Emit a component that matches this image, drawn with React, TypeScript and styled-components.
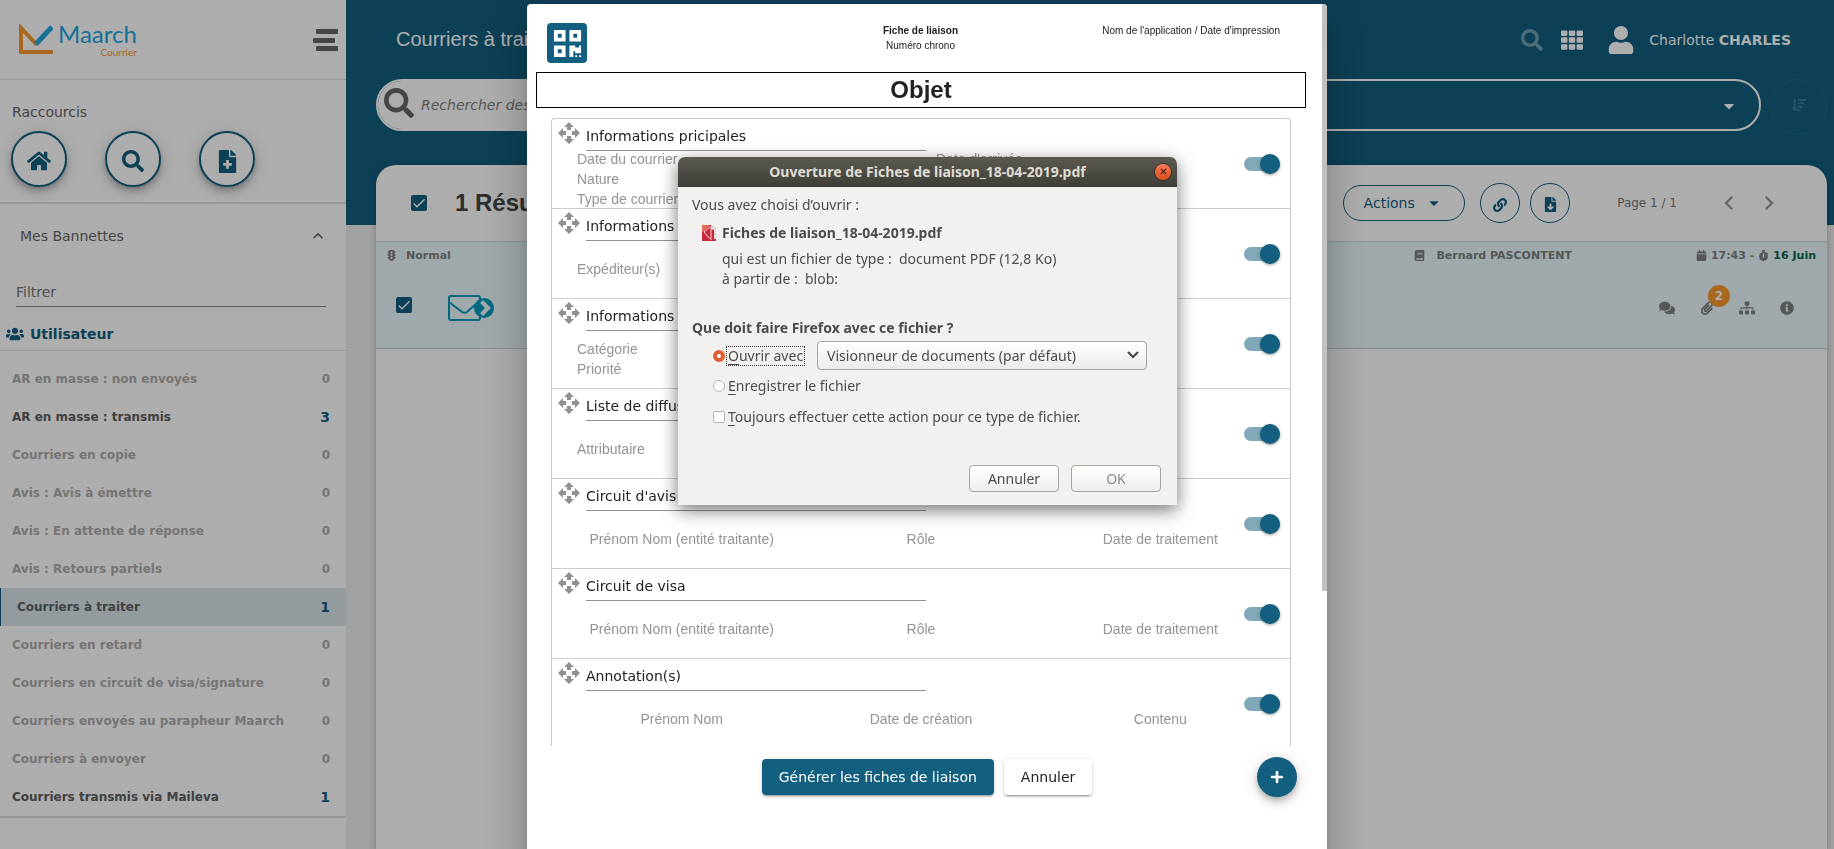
import React from "react";
import styled, { createGlobalStyle } from "styled-components";
import {
  FaBook,
  FaCalendar,
  FaCaretDown,
  FaComments,
  FaFileDownload,
  FaFileMedical,
  FaHome,
  FaInfoCircle,
  FaLink,
  FaPaperclip,
  FaPlus,
  FaQrcode,
  FaSearch,
  FaSitemap,
  FaSortAmountDown,
  FaStopwatch,
  FaTh,
  FaTrafficLight,
  FaUser,
  FaUsers,
} from "react-icons/fa";
import { MdCheck, MdChevronLeft, MdChevronRight, MdExpandLess, MdOpenWith } from "react-icons/md";

const teal = "#135f7f";
const orange = "#f99830";
const divider = "#e0e0e0";
const dejavu = '"DejaVu Sans", sans-serif';
const liberation = '"Liberation Sans", Arial, sans-serif';
const system = '"Noto Sans", "Open Sans", sans-serif';

const GlobalStyle = createGlobalStyle`
  *, *::before, *::after { box-sizing: border-box; }
  body { margin: 0; font-family: ${dejavu}; font-size: 14px; color: #666; overflow: hidden; }
  button, input, select { font: inherit; color: inherit; margin: 0; }
  button { cursor: pointer; padding: 0; border: 0; background: none; }
  ul { list-style: none; margin: 0; padding: 0; }
  h1, h2, h3, p { margin: 0; font-weight: normal; }
  svg { display: block; flex: none; }
`;

/* ---------- Application shell ---------- */

const Shell = styled.div`
  display: flex;
  height: 100vh;
  min-height: 840px;
  background: #ededed;
`;

const Sidebar = styled.aside`
  flex: none;
  width: 346px;
  background: #fff;
`;

const SidebarTop = styled.div`
  display: flex;
  align-items: center;
  justify-content: space-between;
  height: 80px;
  padding: 0 8px 0 19px;
  border-bottom: 1px solid ${divider};
`;

const Logo = styled.div`
  display: flex;
  align-items: center;
  gap: 5px;
`;

const LogoWords = styled.div`
  display: flex;
  flex-direction: column;
  align-items: flex-end;
  font-family: Lato, sans-serif;
`;

const LogoName = styled.span`
  font-size: 24px;
  line-height: 25px;
  font-weight: 400;
  color: #24a5dd;
`;

const LogoSub = styled.span`
  font-size: 10px;
  line-height: 12px;
  color: ${orange};
`;

const Shortcuts = styled.section`
  height: 124px;
  padding: 22px 11px 0;
  border-bottom: 2px solid ${divider};
`;

const SectionLabel = styled.h2`
  font-size: 14px;
  line-height: 20px;
  padding-left: 1px;
`;

const ShortcutRow = styled.div`
  display: flex;
  gap: 38px;
  margin-top: 9px;
`;

const ShortcutButton = styled.button`
  display: grid;
  place-items: center;
  width: 56px;
  height: 56px;
  padding-top: 4px;
  border: 2px solid ${teal};
  border-radius: 50%;
  color: ${teal};
  background: #fff;
  box-shadow: 0 3px 5px -1px rgba(0, 0, 0, 0.2), 0 6px 10px rgba(0, 0, 0, 0.14),
    0 1px 18px rgba(0, 0, 0, 0.12);
`;

const BasketHeader = styled.div`
  display: flex;
  align-items: center;
  justify-content: space-between;
  height: 64px;
  padding: 0 18px 0 20px;
`;

const FilterInput = styled.input`
  display: block;
  width: calc(100% - 36px);
  height: 31px;
  margin: 8px 0 0 16px;
  padding: 1px 0 0;
  border: 0;
  border-bottom: 1px solid #858585;
  background: none;
  outline: none;
  &::placeholder {
    color: #767676;
    opacity: 1;
  }
`;

const GroupTitle = styled.h3`
  display: flex;
  align-items: center;
  gap: 6px;
  height: 44px;
  padding: 10px 0 0 6px;
  border-bottom: 1px solid ${divider};
  font-size: 14px;
  font-weight: bold;
  color: ${teal};
`;

const BasketList = styled.ul`
  padding-top: 9px;
  border-bottom: 2px solid ${divider};
`;

const Basket = styled.li<{ $active?: boolean }>`
  display: flex;
  align-items: center;
  justify-content: space-between;
  height: 38px;
  padding: 0 16px 0 ${(p) => (p.$active ? "16px" : "12px")};
  border-left: ${(p) => (p.$active ? `1px solid ${teal}` : "0")};
  background: ${(p) => (p.$active ? "#dae5ea" : "transparent")};
  color: #adadad;
  font-size: 12px;
  font-weight: bold;
`;

const BasketCount = styled.span<{ $filled?: boolean }>`
  font-size: ${(p) => (p.$filled ? "14px" : "12px")};
  color: ${(p) => (p.$filled ? teal : "inherit")};
`;

const BasketName = styled.span<{ $filled?: boolean }>`
  color: ${(p) => (p.$filled ? "#606060" : "#adadad")};
`;

/* ---------- Main column ---------- */

const Main = styled.main`
  flex: 1;
  min-width: 0;
  display: flex;
  flex-direction: column;
`;

const Banner = styled.header`
  height: 225px;
  background: ${teal};
  color: #fff;
`;

const TopBar = styled.div`
  display: flex;
  align-items: center;
  height: 79px;
  padding: 0 43px 0 50px;
`;

const PageTitle = styled.h1`
  flex: 1;
  font-family: ${liberation};
  font-size: 20px;
`;

const UserTools = styled.div`
  display: flex;
  align-items: center;
  gap: 18px;
`;

const IconButton = styled.button<{ $dim?: boolean }>`
  display: grid;
  place-items: center;
  opacity: ${(p) => (p.$dim ? 0.4 : 1)};
`;

const UserName = styled.span`
  display: flex;
  align-items: center;
  gap: 14px;
  margin-left: 6px;
`;

const SearchRow = styled.div`
  display: flex;
  gap: 10px;
  padding: 0 7px 0 30px;
`;

const SearchBar = styled.div`
  flex: 1;
  display: flex;
  height: 52px;
  border-radius: 26px;
  border: 2px solid #fff;
`;

const SearchField = styled.label`
  flex: 1;
  display: flex;
  align-items: center;
  gap: 5px;
  padding-left: 6px;
  border-radius: 24px 0 0 24px;
  background: #fff;
  color: #666;
  svg {
    margin-bottom: 5px;
  }
  input {
    flex: 1;
    border: 0;
    outline: none;
    background: none;
    font-style: italic;
  }
  input::placeholder {
    color: #808080;
    opacity: 1;
  }
`;

const FilterDrop = styled.button`
  flex: 1;
  display: flex;
  align-items: center;
  justify-content: flex-end;
  padding: 2px 22px 0 0;
`;

const SortButton = styled.button`
  display: grid;
  place-items: center;
  width: 56px;
  height: 56px;
  padding-bottom: 4px;
  border: 1px solid #26647f;
  border-radius: 50%;
  color: #3f819e;
`;

const Panel = styled.section`
  flex: 1;
  margin: -60px 7px 0 30px;
  border-radius: 20px 20px 0 0;
  background: #fff;
  box-shadow: 0 2px 6px rgba(0, 0, 0, 0.25);
  overflow: hidden;
`;

const PanelHeader = styled.div`
  display: flex;
  align-items: center;
  height: 77px;
  padding: 0 44px 0 35px;
  border-bottom: 1px solid #d6d6d6;
`;

const CheckSquare = styled.label`
  position: relative;
  display: grid;
  width: 16px;
  height: 16px;
  border-radius: 2px;
  background: ${teal};
  color: #fff;
  input {
    position: absolute;
    inset: 0;
    opacity: 0;
  }
`;

const ResultCount = styled.h2`
  flex: 1;
  margin-left: 28px;
  font-family: ${liberation};
  font-size: 24px;
  font-weight: bold;
  color: #444;
`;

const ActionsButton = styled.button`
  display: flex;
  align-items: center;
  justify-content: center;
  gap: 12px;
  width: 122px;
  height: 36px;
  margin-right: 15px;
  padding-right: 4px;
  border: 1px solid ${teal};
  border-radius: 18px;
  color: ${teal};
`;

const RoundButton = styled.button`
  display: grid;
  place-items: center;
  width: 40px;
  height: 40px;
  margin-right: 10px;
  padding-top: 3px;
  border: 1px solid ${teal};
  border-radius: 50%;
  color: ${teal};
`;

const PageLabel = styled.span`
  margin: 0 38px 0 37px;
  font-size: 12px;
  color: #767676;
`;

const Pager = styled.div`
  display: flex;
  gap: 12px;
  color: #999;
`;

const MailRow = styled.article`
  height: 107px;
  background: #ebf9fd;
  border-bottom: 1px solid #c8d4d8;
  color: #808080;
`;

const MailMeta = styled.div`
  display: flex;
  align-items: center;
  height: 26px;
  padding: 0 11px 0 10px;
  font-size: 11px;
  font-weight: bold;
`;

const MetaItem = styled.span<{ $gap: number }>`
  display: flex;
  align-items: center;
  gap: ${(p) => p.$gap}px;
`;

const Sender = styled(MetaItem)`
  margin: 0 124px 0 auto;
`;

const DueDate = styled.span`
  color: #0a6849;
`;

const MailBody = styled.div`
  display: flex;
  align-items: center;
  height: 76px;
  padding: 4px 20px 0;
  ${CheckSquare} {
    margin-bottom: 6px;
  }
`;

const MailIcon = styled.svg`
  margin-left: 36px;
  color: #0098bd;
`;

const MailTools = styled.div`
  display: flex;
  margin-left: auto;
`;

const MailTool = styled.button`
  position: relative;
  display: grid;
  place-items: center;
  width: 40px;
  height: 40px;
`;

const Badge = styled.span`
  position: absolute;
  top: -3px;
  right: -3px;
  width: 22px;
  height: 22px;
  border-radius: 50%;
  background: ${orange};
  color: #fff;
  font-size: 12px;
  line-height: 22px;
  font-weight: bold;
`;

/* ---------- Summary sheet dialog ---------- */

const Backdrop = styled.div`
  position: fixed;
  inset: 0;
  display: flex;
  justify-content: center;
  padding: 4px 0 0 20px;
  background: rgba(0, 0, 0, 0.32);
`;

const Sheet = styled.div`
  position: relative;
  width: 100%;
  max-width: 800px;
  height: 900px;
  padding: 15px 21px 0 9px;
  border-radius: 4px;
  background: #fff;
  color: #222;
  box-shadow: 0 11px 15px -7px rgba(0, 0, 0, 0.2), 0 24px 38px 3px rgba(0, 0, 0, 0.14),
    0 9px 46px 8px rgba(0, 0, 0, 0.12);
`;

const ScrollThumb = styled.span`
  position: absolute;
  top: 0;
  right: 0;
  width: 5px;
  height: 587px;
  border-radius: 0 4px 0 0;
  background: #c1c1c1;
`;

const SheetHead = styled.div`
  display: grid;
  grid-template-columns: 1fr 1fr 1fr;
  height: 53px;
  padding: 4px 26px 0 11px;
  font-family: ${liberation};
  font-size: 10px;
  line-height: 15px;
`;

const QrButton = styled.button`
  display: grid;
  place-items: center;
  width: 40px;
  height: 40px;
  border-radius: 4px;
  background: ${teal};
  color: #fff;
`;

const SheetCenter = styled.div`
  padding-left: 14px;
  text-align: center;
`;

const SheetRight = styled.div`
  text-align: right;
`;

const Subject = styled.h2`
  height: 36px;
  border: 1px solid #000;
  font-family: ${liberation};
  font-size: 24px;
  line-height: 34px;
  font-weight: bold;
  text-align: center;
`;

const Units = styled.div`
  height: 628px;
  margin: 10px 15px 0;
  border: 1px solid #ccc;
  border-bottom: 0;
  border-radius: 4px 4px 0 0;
  overflow: hidden;
`;

const Unit = styled.section`
  position: relative;
  height: 90px;
  border-bottom: 1px solid #ccc;
`;

const UnitHead = styled.div`
  display: flex;
  gap: 5px;
  height: 30px;
  padding-left: 5px;
  svg {
    color: #919191;
    margin-top: 2px;
  }
`;

const UnitTitle = styled.input`
  width: 340px;
  height: 32px;
  padding: 2px 0 0;
  border: 0;
  border-bottom: 1px solid #949494;
  background: none;
  outline: none;
  color: #222;
`;

const UnitBody = styled.div<{ $columns: number; $centered?: boolean }>`
  display: grid;
  grid-template-columns: repeat(${(p) => p.$columns}, 1fr);
  align-content: center;
  height: 60px;
  padding: 0 10px;
  font-family: ${liberation};
  font-size: 14px;
  line-height: 20px;
  color: #949494;
  text-align: ${(p) => (p.$centered ? "center" : "left")};
  span {
    padding: 0 ${(p) => (p.$centered ? "0" : "15px")};
    white-space: nowrap;
  }
`;

const Toggle = styled.label`
  position: absolute;
  top: 38px;
  right: 10px;
  width: 36px;
  height: 14px;
  border-radius: 7px;
  background: #82a9ba;
  input {
    position: absolute;
    inset: 0;
    opacity: 0;
  }
  &::after {
    content: "";
    position: absolute;
    top: -3px;
    right: 0;
    width: 20px;
    height: 20px;
    border-radius: 50%;
    background: ${teal};
    box-shadow: 0 1px 3px rgba(0, 0, 0, 0.4);
  }
`;

const SheetActions = styled.div`
  position: relative;
  display: flex;
  justify-content: center;
  gap: 10px;
  margin-top: 13px;
  padding-left: 12px;
`;

const SheetButton = styled.button<{ $primary?: boolean }>`
  height: 36px;
  padding: 0 17px;
  border-radius: 4px;
  background: ${(p) => (p.$primary ? teal : "#fff")};
  color: ${(p) => (p.$primary ? "#fff" : "#222")};
  box-shadow: 0 3px 1px -2px rgba(0, 0, 0, 0.2), 0 2px 2px rgba(0, 0, 0, 0.14),
    0 1px 5px rgba(0, 0, 0, 0.12);
`;

const AddButton = styled.button`
  position: absolute;
  top: -2px;
  right: 9px;
  display: grid;
  place-items: center;
  width: 40px;
  height: 40px;
  border-radius: 50%;
  background: ${teal};
  color: #fff;
  box-shadow: 0 3px 5px -1px rgba(0, 0, 0, 0.2), 0 6px 10px rgba(0, 0, 0, 0.14),
    0 1px 18px rgba(0, 0, 0, 0.12);
`;

/* ---------- Browser download window ---------- */

const WindowLayer = styled.div`
  position: fixed;
  inset: 0;
  display: flex;
  justify-content: center;
  align-items: flex-start;
  padding: 157px 0 0 21px;
`;

const DownloadWindow = styled.div`
  width: 100%;
  max-width: 499px;
  border-radius: 7px 7px 0 0;
  background: #f2f1f0;
  color: #4c4c4c;
  font-family: ${system};
  font-size: 14px;
  line-height: 20px;
  box-shadow: 0 5px 18px rgba(0, 0, 0, 0.55);
`;

const WindowTitle = styled.div`
  display: grid;
  grid-template-columns: 1fr auto 1fr;
  align-items: center;
  height: 30px;
  padding: 0 6px 1px;
  border-radius: 7px 7px 0 0;
  background: linear-gradient(#5c5a50, #3f3e38);
  color: #dfdbd2;
`;

const CloseButton = styled.button`
  grid-column: 3;
  justify-self: end;
  display: grid;
  place-items: center;
  width: 16px;
  height: 16px;
  border-radius: 50%;
  background: linear-gradient(#f57b58, #df4d1b);
  box-shadow: 0 0 0 1px #34332e;
  color: #4a2417;
`;

const TitleText = styled.h2`
  grid-column: 2;
  font-size: 14px;
  font-weight: bold;
`;

const WindowBody = styled.form`
  padding: 8px 14px 13px;
`;

const FileName = styled.p`
  display: flex;
  align-items: center;
  gap: 6px;
  margin: 8px 0 6px 10px;
  font-weight: bold;
`;

const Detail = styled.p`
  padding-left: 30px;
`;

const Question = styled.p`
  margin-top: 29px;
  font-weight: bold;
`;

const OptionRow = styled.div<{ $top: number }>`
  display: flex;
  align-items: center;
  gap: 2px;
  margin-top: ${(p) => p.$top}px;
  padding-left: 21px;
`;

const OptionInput = styled.input`
  appearance: none;
  width: 12px;
  height: 12px;
  border: 1px solid #b6b2ad;
  border-radius: ${(p) => (p.type === "radio" ? "50%" : "2px")};
  background: #fff;
  &:checked {
    border: 4px solid #dd6034;
  }
`;

const OptionLabel = styled.label<{ $focused?: boolean }>`
  padding: 0 1px;
  outline: ${(p) => (p.$focused ? "1px dotted #333" : "0")};
  line-height: ${(p) => (p.$focused ? "18px" : "20px")};
  u {
    text-underline-offset: 3px;
  }
`;

const AppSelect = styled.span`
  position: relative;
  flex: 1;
  margin: 0 16px 0 11px;
  select {
    appearance: none;
    display: block;
    width: 100%;
    height: 29px;
    padding: 0 30px 0 9px;
    border: 1px solid #a8a49f;
    border-radius: 4px;
    background: linear-gradient(#fff, #ebebea);
    outline: none;
  }
  svg {
    position: absolute;
    top: 9px;
    right: 8px;
    pointer-events: none;
  }
`;

const WindowButtons = styled.div`
  display: flex;
  justify-content: flex-end;
  gap: 12px;
  margin-top: 38px;
  padding-right: 2px;
`;

const WindowButton = styled.button`
  width: 90px;
  height: 27px;
  border: 1px solid #a8a49f;
  border-radius: 4px;
  background: linear-gradient(#fff, #eeeeed);
  &:disabled {
    color: #8c8c8c;
  }
`;

const baskets = [
  { name: "AR en masse : non envoyés", count: 0 },
  { name: "AR en masse : transmis", count: 3 },
  { name: "Courriers en copie", count: 0 },
  { name: "Avis : Avis à émettre", count: 0 },
  { name: "Avis : En attente de réponse", count: 0 },
  { name: "Avis : Retours partiels", count: 0 },
  { name: "Courriers à traiter", count: 1, active: true },
  { name: "Courriers en retard", count: 0 },
  { name: "Courriers en circuit de visa/signature", count: 0 },
  { name: "Courriers envoyés au parapheur Maarch", count: 0 },
  { name: "Courriers à envoyer", count: 0 },
  { name: "Courriers transmis via Maileva", count: 1 },
];

const units = [
  {
    title: "Informations pricipales",
    columns: 2,
    cells: ["Date du courrier", "Date d'arrivée", "Nature", "", "Type de courrier", ""],
  },
  { title: "Informations expéditeur", columns: 2, cells: ["Expéditeur(s)"] },
  { title: "Informations complémentaires", columns: 1, cells: ["Catégorie", "Priorité"] },
  { title: "Liste de diffusion", columns: 2, cells: ["Attributaire"] },
  {
    title: "Circuit d'avis",
    columns: 3,
    centered: true,
    cells: ["Prénom Nom (entité traitante)", "Rôle", "Date de traitement"],
  },
  {
    title: "Circuit de visa",
    columns: 3,
    centered: true,
    cells: ["Prénom Nom (entité traitante)", "Rôle", "Date de traitement"],
  },
  {
    title: "Annotation(s)",
    columns: 3,
    centered: true,
    cells: ["Prénom Nom", "Date de création", "Contenu"],
  },
];

function Checkbox({ label }: { label: string }) {
  return (
    <CheckSquare>
      <input type="checkbox" defaultChecked aria-label={label} />
      <MdCheck size={16} />
    </CheckSquare>
  );
}

function SidePanel() {
  return (
    <Sidebar>
      <SidebarTop>
        <Logo>
          <svg width="34" height="31" viewBox="0 0 34 31" fill="none" strokeWidth="4">
            <path d="M34 28H2V4L18 21" stroke={orange} />
            <path d="M17 20L33 3" stroke="#24a5dd" strokeWidth="5" />
          </svg>
          <LogoWords>
            <LogoName>Maarch</LogoName>
            <LogoSub>Courrier</LogoSub>
          </LogoWords>
        </Logo>
        <IconButton aria-label="Menu">
          <svg width="25" height="22" viewBox="0 0 25 22" fill="#666">
            <rect x="3" y="0" width="22" height="5" rx="1" />
            <rect x="0" y="9" width="22" height="5" rx="1" />
            <rect x="3" y="17" width="22" height="5" rx="1" />
          </svg>
        </IconButton>
      </SidebarTop>
      <Shortcuts>
        <SectionLabel>Raccourcis</SectionLabel>
        <ShortcutRow>
          <ShortcutButton aria-label="Accueil">
            <FaHome size={24} />
          </ShortcutButton>
          <ShortcutButton aria-label="Rechercher">
            <FaSearch size={22} />
          </ShortcutButton>
          <ShortcutButton aria-label="Enregistrer un courrier">
            <FaFileMedical size={23} />
          </ShortcutButton>
        </ShortcutRow>
      </Shortcuts>
      <BasketHeader>
        <span>Mes Bannettes</span>
        <MdExpandLess size={20} />
      </BasketHeader>
      <FilterInput placeholder="Filtrer" aria-label="Filtrer" />
      <GroupTitle>
        <FaUsers size={18} />
        Utilisateur
      </GroupTitle>
      <BasketList>
        {baskets.map((b) => (
          <Basket key={b.name} $active={b.active}>
            <BasketName $filled={b.count > 0}>{b.name}</BasketName>
            <BasketCount $filled={b.count > 0}>{b.count}</BasketCount>
          </Basket>
        ))}
      </BasketList>
    </Sidebar>
  );
}

function MailList() {
  return (
    <Main>
      <Banner>
        <TopBar>
          <PageTitle>Courriers à traiter</PageTitle>
          <UserTools>
            <IconButton $dim aria-label="Rechercher">
              <FaSearch size={22} />
            </IconButton>
            <IconButton aria-label="Applications">
              <FaTh size={22} />
            </IconButton>
            <UserName>
              <FaUser size={28} />
              <span>
                Charlotte <b>CHARLES</b>
              </span>
            </UserName>
          </UserTools>
        </TopBar>
        <SearchRow>
          <SearchBar>
            <SearchField>
              <FaSearch size={30} />
              <input placeholder="Rechercher des courriers" aria-label="Rechercher des courriers" />
            </SearchField>
            <FilterDrop aria-label="Filtres">
              <FaCaretDown size={16} />
            </FilterDrop>
          </SearchBar>
          <SortButton aria-label="Trier">
            <FaSortAmountDown size={14} />
          </SortButton>
        </SearchRow>
      </Banner>
      <Panel>
        <PanelHeader>
          <Checkbox label="Tout sélectionner" />
          <ResultCount>1 Résultat(s)</ResultCount>
          <ActionsButton>
            Actions <FaCaretDown size={14} />
          </ActionsButton>
          <RoundButton aria-label="Lier">
            <FaLink size={14} />
          </RoundButton>
          <RoundButton aria-label="Exporter">
            <FaFileDownload size={15} />
          </RoundButton>
          <PageLabel>Page 1 / 1</PageLabel>
          <Pager>
            <IconButton aria-label="Page précédente">
              <MdChevronLeft size={28} />
            </IconButton>
            <IconButton aria-label="Page suivante">
              <MdChevronRight size={28} />
            </IconButton>
          </Pager>
        </PanelHeader>
        <MailRow>
          <MailMeta>
            <MetaItem $gap={9}>
              <FaTrafficLight size={11} />
              Normal
            </MetaItem>
            <Sender $gap={11}>
              <FaBook size={11} />
              Bernard PASCONTENT
            </Sender>
            <MetaItem $gap={4}>
              <FaCalendar size={11} />
              17:43 -
              <FaStopwatch size={11} />
              <DueDate>16 Juin</DueDate>
            </MetaItem>
          </MailMeta>
          <MailBody>
            <Checkbox label="Sélectionner le courrier" />
            <MailIcon width="46" height="27" viewBox="0 0 46 27" fill="none">
              <rect x="1" y="1" width="31" height="24" rx="2" stroke="currentColor" strokeWidth="2" />
              <path d="M1 7L14 17Q16.500 18.500 19 17L28 9" stroke="currentColor" strokeWidth="2" />
              <circle cx="36" cy="13" r="10" fill="currentColor" />
              <path d="M32 8L35 5L43 13L35 21L32 18L37 13Z" fill="#ebf9fd" />
            </MailIcon>
            <MailTools>
              <MailTool aria-label="Annotations">
                <FaComments size={16} />
              </MailTool>
              <MailTool aria-label="Pièces jointes">
                <FaPaperclip size={14} />
                <Badge>2</Badge>
              </MailTool>
              <MailTool aria-label="Liste de diffusion">
                <FaSitemap size={16} />
              </MailTool>
              <MailTool aria-label="Détails">
                <FaInfoCircle size={14} />
              </MailTool>
            </MailTools>
          </MailBody>
        </MailRow>
      </Panel>
    </Main>
  );
}

function SummarySheet() {
  return (
    <Backdrop>
      <Sheet role="dialog" aria-label="Fiche de liaison">
        <SheetHead>
          <QrButton aria-label="QR code">
            <FaQrcode size={31} />
          </QrButton>
          <SheetCenter>
            <b>Fiche de liaison</b>
            <br />
            Numéro chrono
          </SheetCenter>
          <SheetRight>Nom de l'application / Date d'impression</SheetRight>
        </SheetHead>
        <Subject>Objet</Subject>
        <Units>
          {units.map((u) => (
            <Unit key={u.title}>
              <UnitHead>
                <MdOpenWith size={24} />
                <UnitTitle defaultValue={u.title} aria-label="Titre du bloc" />
              </UnitHead>
              <UnitBody $columns={u.columns} $centered={u.centered}>
                {u.cells.map((c, i) => (
                  <span key={i}>{c}</span>
                ))}
              </UnitBody>
              <Toggle>
                <input type="checkbox" defaultChecked aria-label={u.title} />
              </Toggle>
            </Unit>
          ))}
        </Units>
        <SheetActions>
          <SheetButton $primary>Générer les fiches de liaison</SheetButton>
          <SheetButton>Annuler</SheetButton>
          <AddButton aria-label="Ajouter">
            <FaPlus size={14} />
          </AddButton>
        </SheetActions>
        <ScrollThumb />
      </Sheet>
    </Backdrop>
  );
}

function DownloadPrompt() {
  return (
    <WindowLayer>
      <DownloadWindow role="dialog" aria-label="Ouverture du fichier">
        <WindowTitle>
          <TitleText>Ouverture de Fiches de liaison_18-04-2019.pdf</TitleText>
          <CloseButton aria-label="Fermer">
            <svg width="7" height="7" viewBox="0 0 8 8" stroke="currentColor" strokeWidth="1.500">
              <path d="M1 1L7 7M7 1L1 7" />
            </svg>
          </CloseButton>
        </WindowTitle>
        <WindowBody onSubmit={(e) => e.preventDefault()}>
          <p>Vous avez choisi d’ouvrir :</p>
          <FileName>
            <svg width="14" height="16" viewBox="0 0 14 16">
              <path d="M0 0H9L14 4V16H0Z" fill="#c8283c" />
              <path d="M0 0H8L1 7H0Z" fill="#ec6a5c" />
              <path d="M9 0L14 4V14H12V5L9 4Z" fill="#ddd" />
              <path d="M8 2L2 7L8 14M9 1V15" stroke="#f6dcdc" fill="none" />
            </svg>
            Fiches de liaison_18-04-2019.pdf
          </FileName>
          <Detail>qui est un fichier de type :&nbsp; document PDF (12,8 Ko)</Detail>
          <Detail>à partir de :&nbsp; blob:</Detail>
          <Question>Que doit faire Firefox avec ce fichier ?</Question>
          <OptionRow $top={3}>
            <OptionInput type="radio" name="mode" id="open" defaultChecked />
            <OptionLabel htmlFor="open" $focused>
              <u>O</u>uvrir avec
            </OptionLabel>
            <AppSelect>
              <select aria-label="Application">
                <option>Visionneur de documents (par défaut)</option>
              </select>
              <svg width="12" height="10" viewBox="0 0 12 10" fill="none" stroke="#444" strokeWidth="2">
                <path d="M1 2L6 7L11 2" />
              </svg>
            </AppSelect>
          </OptionRow>
          <OptionRow $top={6}>
            <OptionInput type="radio" name="mode" id="save" />
            <OptionLabel htmlFor="save">
              <u>E</u>nregistrer le fichier
            </OptionLabel>
          </OptionRow>
          <OptionRow $top={11}>
            <OptionInput type="checkbox" id="always" />
            <OptionLabel htmlFor="always">
              <u>T</u>oujours effectuer cette action pour ce type de fichier.
            </OptionLabel>
          </OptionRow>
          <WindowButtons>
            <WindowButton type="button">Annuler</WindowButton>
            <WindowButton disabled>OK</WindowButton>
          </WindowButtons>
        </WindowBody>
      </DownloadWindow>
    </WindowLayer>
  );
}

export default function App() {
  return (
    <>
      <GlobalStyle />
      <Shell>
        <SidePanel />
        <MailList />
      </Shell>
      <SummarySheet />
      <DownloadPrompt />
    </>
  );
}
